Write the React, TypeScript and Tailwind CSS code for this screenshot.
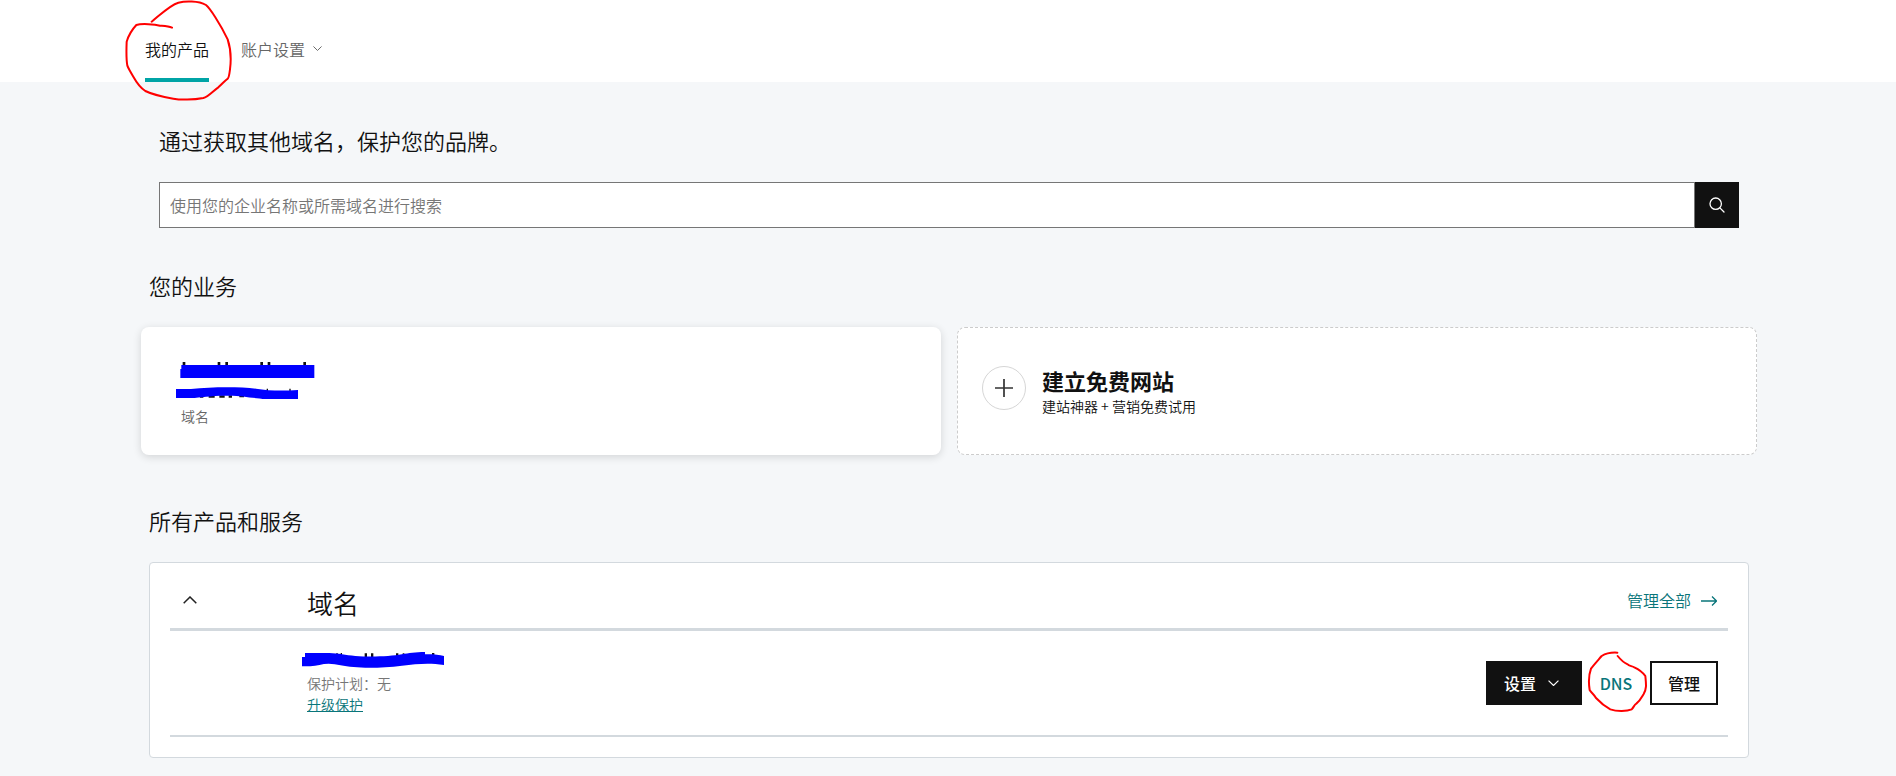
import React from "react";

function Chevron({ up = false, className = "" }: { up?: boolean; className?: string }) {
  return (
    <svg viewBox="0 0 14 8" fill="none" stroke="currentColor" className={className} aria-hidden="true">
      <path d={up ? "M0.7 7.3 7 1 13.3 7.3" : "M0.7 0.7 7 7 13.3 0.7"} strokeWidth="1.5" />
    </svg>
  );
}

function Header() {
  return (
    <header className="bg-white pl-0.5">
      <nav className="mx-auto flex h-[82px] max-w-[1608px] gap-8">
        <a href="#products" className="relative flex items-center border-b-4 border-[#00a4a6] pt-5 text-[#111]">
          我的产品
          <svg
            viewBox="45 0 324 303"
            className="pointer-events-none absolute top-0 -left-5 h-[101px] w-[108px] max-w-none"
            fill="none"
            stroke="#ff0000"
            strokeWidth="6"
            strokeLinecap="round"
            strokeLinejoin="round"
            aria-hidden="true"
          >
            <path d="M125 65C150 45 180 15 205 8C225 3 265 2 288 15C300 25 330 70 353 118C362 145 365 170 360 208C358 225 356 235 352 237C345 242 343 245 325 262C310 272 295 290 280 294C250 300 210 300 190 296C160 291 130 285 106 273C90 262 80 248 70 230C62 217 55 205 52 197C48 175 49 150 50 125C55 108 65 90 79 75C95 70 135 73 150 77C165 78 175 78 186 83" />
          </svg>
        </a>
        <button type="button" className="flex items-center gap-2 pt-4 text-[#666]">
          账户设置
          <Chevron className="w-[9px]" />
        </button>
      </nav>
    </header>
  );
}

function DomainSearch() {
  return (
    <section className="px-2.5">
      <h2 className="text-[22px] leading-8">通过获取其他域名，保护您的品牌。</h2>
      <form className="mt-[26px] flex h-[46px]" onSubmit={(e) => e.preventDefault()}>
        <input
          type="text"
          aria-label="搜索域名"
          placeholder="使用您的企业名称或所需域名进行搜索"
          className="min-w-0 flex-1 border border-[#767676] bg-white px-2.5 text-base outline-none placeholder:text-[#767676]"
        />
        <button type="submit" aria-label="搜索" className="flex w-11 items-center justify-center bg-[#111] text-white">
          <svg viewBox="0 0 16 16" className="size-4" fill="none" stroke="currentColor" strokeWidth="1.3" strokeLinecap="round" aria-hidden="true">
            <circle cx="6.7" cy="6.7" r="5.7" />
            <path d="M10.9 10.9 15 15" />
          </svg>
        </button>
      </form>
    </section>
  );
}

function Businesses() {
  return (
    <section className="mt-[41px]">
      <h2 className="text-[22px] leading-8">您的业务</h2>
      <div className="-mx-2 mt-[26px] grid grid-cols-2 gap-4">
        <article className="h-32 rounded-lg bg-white pt-[33px] pl-[35px] shadow-[0_2px_8px_rgba(0,0,0,0.14)]">
          <svg viewBox="0 0 420 126" className="h-[42px] w-[140px]" aria-hidden="true">
            <g fill="#111">
              <path d="M20 6h8v12h-8zM125 6h8v12h-8zM148 6h8v12h-8zM253 6h8v12h-8zM275 6h8v12h-8zM382 6h8v12h-8z" />
              <path d="M72 104h10v9H72zM98 106h18v7H98zM130 106h16v7h-16zM158 106h10v7h-10zM190 104h14v8h-14zM272 86h4v8h-4zM340 86h4v8h-4z" />
            </g>
            <g fill="#0000ff">
              <path d="M16 15H415V54H13V27H16Z" />
              <path d="M0 87H45C110 80 190 80 240 86C275 91 310 94 366 90V117H270C220 114 200 106 150 107C100 107 75 113 45 114H0Z" />
            </g>
          </svg>
          <p className="mt-1 pl-[5px] text-sm leading-5 text-[#666]">域名</p>
        </article>
        <article className="flex h-32 items-center gap-4 rounded-lg border border-dashed border-[#ccc] bg-white pl-6">
          <button
            type="button"
            aria-label="建立免费网站"
            className="mb-1.5 flex size-11 items-center justify-center rounded-full border border-[#d6d6d6] text-[#333]"
          >
            <svg viewBox="0 0 18 18" className="size-[18px]" stroke="currentColor" strokeWidth="1.7" aria-hidden="true">
              <path d="M9 0v18M0 9h18" />
            </svg>
          </button>
          <div className="pb-0.5">
            <h3 className="text-[22px] leading-8 font-bold">建立免费网站</h3>
            <p className="text-sm leading-5">建站神器 + 营销免费试用</p>
          </div>
        </article>
      </div>
    </section>
  );
}

function Products() {
  return (
    <section className="mt-[49px]">
      <h2 className="text-[22px] leading-8">所有产品和服务</h2>
      <div className="mt-[26px] rounded border border-[#d3d9de] bg-white px-5 pb-5">
        <div className="grid h-[68px] grid-cols-[137px_1fr_auto] border-b-3 border-[#d3d9de]">
          <button type="button" aria-label="收起" className="mt-[33px] ml-[13px] h-2 w-3.5 text-[#222]">
            <Chevron up className="w-3.5" />
          </button>
          <h3 className="mt-[22px] text-[26px] leading-9">域名</h3>
          <a href="#manage-all" className="mt-[25px] mr-[11px] flex h-6 items-center gap-2.5 text-[#09757a]">
            管理全部
            <svg viewBox="0 0 16 10" className="mt-0.5 w-4" fill="none" stroke="currentColor" strokeWidth="1.3" aria-hidden="true">
              <path d="M0 5h15.3M11 0.5 15.5 5 11 9.5" />
            </svg>
          </a>
        </div>
        <div className="grid h-[106px] grid-cols-[137px_1fr_auto] items-center border-b-2 border-[#d3d9de] pr-2.5">
          <div className="col-start-2">
            <svg viewBox="0 0 426 48" className="mb-[5px] -ml-[5px] h-4 w-[142px]" aria-hidden="true">
              <path fill="#111" d="M103 3h4v10h-4zM116 3h4v10h-4zM188 4h7v12h-7zM207 4h7v12h-7zM282 4h7v12h-7zM302 4h5v12h-5zM390 3h7v12h-7z" />
              <path fill="#0000ff" d="M9 3H82C110 4 130 9 160 12C210 16 265 13 300 7C320 3 340 0 369 0V7C390 6 410 8 426 12V39C380 32 345 36 300 41C245 48 190 49 155 45C125 42 105 36 80 35C60 35 45 42 25 43H0V15H9Z" />
            </svg>
            <p className="text-sm leading-[21px] text-[#767676]">保护计划：无</p>
            <a href="#upgrade" className="block w-fit text-sm leading-[21px] text-[#09757a] underline">
              升级保护
            </a>
          </div>
          <div className="flex h-11 font-medium">
            <button type="button" className="flex w-24 items-center gap-3 bg-[#111] pl-[18px] text-white">
              设置
              <Chevron className="w-[11px]" />
            </button>
            <div className="relative flex w-[68px]">
              <button type="button" className="w-full text-[#09757a]">
                DNS
              </button>
              <svg
                viewBox="380 300 183 189"
                className="pointer-events-none absolute -top-[11px] left-[5px] h-[63px] w-[61px] max-w-none"
                fill="none"
                stroke="#ff0000"
                strokeWidth="6"
                strokeLinecap="round"
                strokeLinejoin="round"
                aria-hidden="true"
              >
                <path d="M471 308C455 307 440 308 424 318C412 332 400 345 392 356C385 375 384 395 388 420C392 428 400 432 407 444C420 458 435 470 450 478C470 485 500 484 514 478C520 472 522 464 528 461C540 452 545 440 550 432C560 415 557 400 555 378C548 368 535 358 522 352C515 348 505 348 502 343C490 338 480 328 472 318" />
              </svg>
            </div>
            <button type="button" className="w-[68px] border-2 border-[#111] bg-white">
              管理
            </button>
          </div>
        </div>
      </div>
    </section>
  );
}

export default function App() {
  return (
    <div className="min-h-screen bg-[#f5f7f9] font-['Noto_Sans_CJK_SC',sans-serif] text-base font-[350] text-[#111]">
      <Header />
      <main className="pt-[42px] pb-[18px] pl-0.5">
        <div className="mx-auto max-w-[1600px]">
          <DomainSearch />
          <Businesses />
          <Products />
        </div>
      </main>
    </div>
  );
}
